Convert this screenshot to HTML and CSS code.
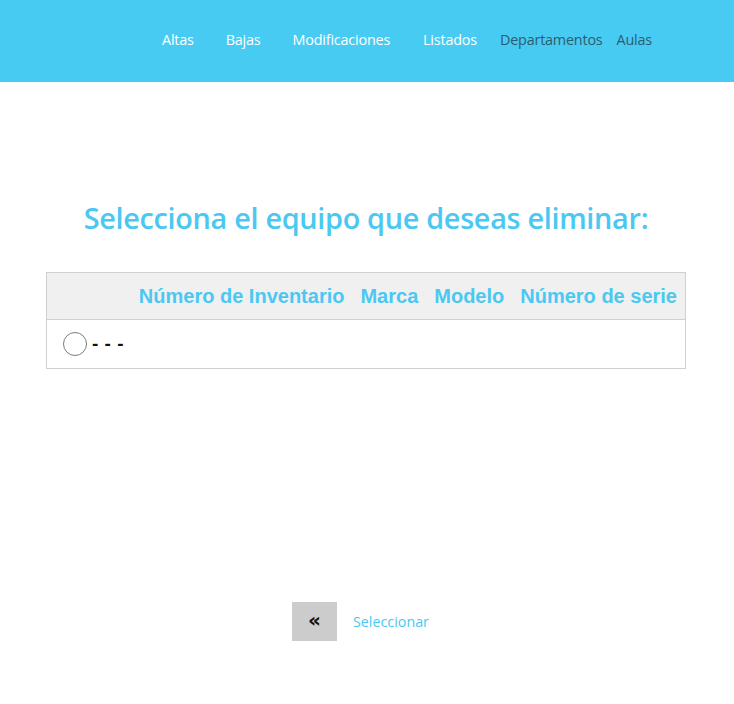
FILE: index.html
```html
<!DOCTYPE html>
<html lang="es">
<head>
<meta charset="utf-8">
<link rel="stylesheet" href="styles.css">
</head>
<body>
<header class="topbar">
  <nav class="nav">
    <a class="nav-link light l-altas" href="#">Altas</a>
    <a class="nav-link light l-bajas" href="#">Bajas</a>
    <a class="nav-link light l-mod" href="#">Modificaciones</a>
    <a class="nav-link light l-list" href="#">Listados</a>
    <a class="nav-link dark l-dep" href="#">Departamentos</a>
    <a class="nav-link dark l-aulas" href="#">Aulas</a>
  </nav>
</header>
<main class="content">
  <h1 class="title">Selecciona el equipo que deseas eliminar:</h1>
  <table class="grid">
    <thead>
      <tr>
        <th class="c-sel"></th>
        <th>Número de Inventario</th>
        <th>Marca</th>
        <th>Modelo</th>
        <th>Número de serie</th>
      </tr>
    </thead>
    <tbody>
      <tr>
        <td colspan="5" class="row-cell"><span class="radio"></span><span class="dash">- - -</span></td>
      </tr>
    </tbody>
  </table>
  <div class="actions">
    <button class="back" type="button">&laquo;</button>
    <a class="select-link" href="#">Seleccionar</a>
  </div>
</main>
</body>
</html>
```

FILE: styles.css
```css
html, body {
  margin: 0;
  padding: 0;
  background: #ffffff;
}
body {
  font-family: "Open Sans", "Noto Sans", sans-serif;
}
.topbar {
  height: 82px;
  background: #48cbf3;
  display: flex;
  align-items: center;
}
.nav {
  display: flex;
  align-items: center;
  padding-left: 162px;
  padding-bottom: 4px;
}
.nav-link {
  font-size: 14.4px;
  text-decoration: none;
  letter-spacing: -0.2px;
}
.light { color: #ffffff; }
.dark { color: #2b5d6e; }
.l-altas { margin-right: 32px; }
.l-bajas { margin-right: 32px; }
.l-mod { margin-right: 33px; }
.l-list { margin-right: 23px; }
.l-dep { margin-right: 14px; }

.content {
  padding: 116px 48px 0 46px;
}
.title {
  margin: 0 0 34px 0;
  text-align: center;
  font-size: 28.8px;
  font-weight: 600;
  color: #4ac8f2;
  letter-spacing: -0.3px;
  line-height: 40px;
}
.grid {
  width: 640px;
  border-collapse: collapse;
  border: 1px solid #d0d0d0;
  font-family: "Liberation Sans", Arial, sans-serif;
}
.grid thead tr {
  background: #f0f0f0;
  border-bottom: 1px solid #d0d0d0;
}
.grid th {
  height: 46px;
  padding: 0 8px;
  font-size: 20px;
  font-weight: bold;
  color: #4ac8f2;
  text-align: left;
  white-space: nowrap;
}
.grid th.c-sel { width: 100%; }
.row-cell {
  height: 48px;
  padding: 0 0 0 16px;
  vertical-align: middle;
}
.row-cell .radio {
  display: inline-block;
  width: 22px;
  height: 22px;
  border: 1px solid #7a7a7a;
  border-radius: 50%;
  vertical-align: middle;
  margin-right: 5px;
}
.dash {
  font-size: 19px;
  font-weight: bold;
  color: #111;
  vertical-align: middle;
  letter-spacing: 0.5px;
}
.actions {
  margin-top: 233px;
  display: flex;
  align-items: center;
  padding-left: 246px;
}
.back {
  width: 45px;
  height: 39px;
  border: none;
  background: #cccccc;
  font-size: 20px;
  font-weight: bold;
  color: #111;
  padding: 0 0 4px 0;
  font-family: "DejaVu Sans", sans-serif;
}
.select-link {
  margin-left: 16px;
  font-size: 14.3px;
  color: #4ac8f2;
  text-decoration: none;
}
```
